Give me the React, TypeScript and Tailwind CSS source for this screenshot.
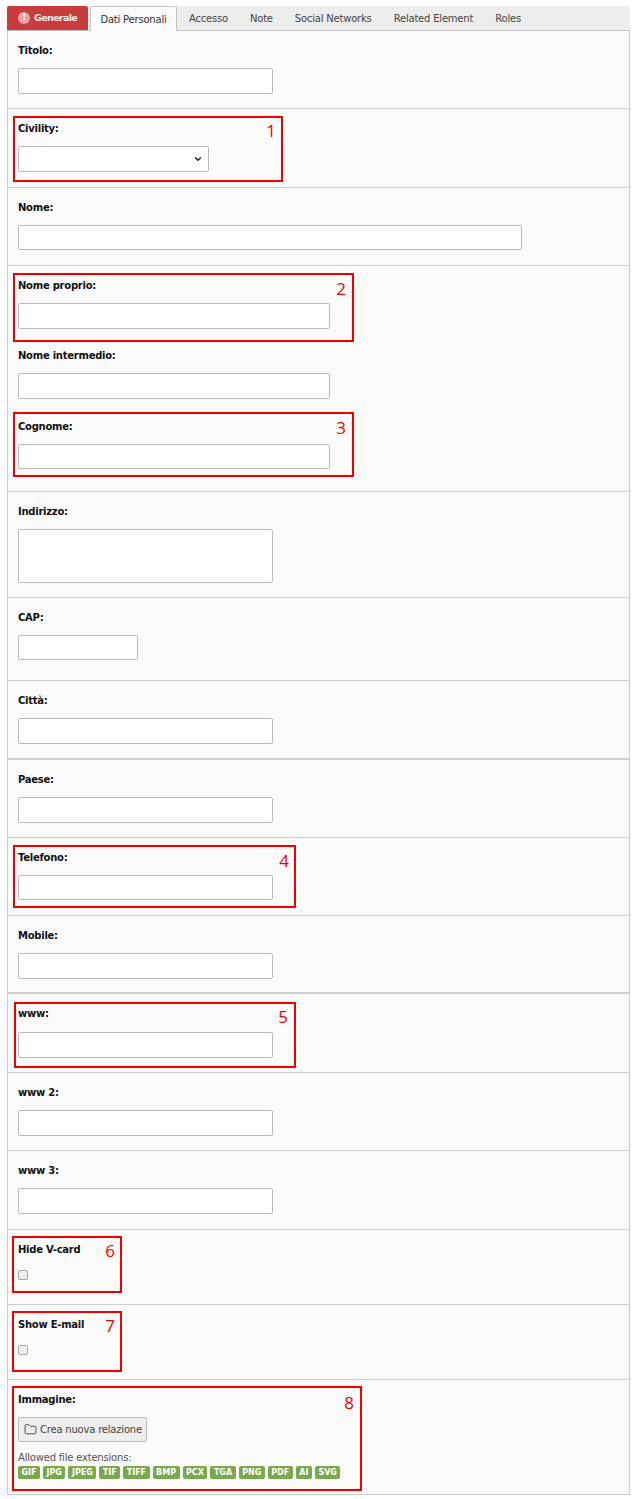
import { ChevronDown, Folder } from "lucide-react";

const font = "font-['DejaVu_Sans',Verdana,sans-serif]";
const inputCls = "block rounded-[2px] border border-[#bbbbbb] bg-white";

const tabs = [
  { name: "Accesso", cls: "ml-[12px] mr-[11px]" },
  { name: "Note", cls: "mx-[11px]" },
  { name: "Social Networks", cls: "mx-[11px]" },
  { name: "Related Element", cls: "mx-[11px]" },
  { name: "Roles", cls: "mx-[11px]" },
];

const exts = ["GIF", "JPG", "JPEG", "TIF", "TIFF", "BMP", "PCX", "TGA", "PNG", "PDF", "AI", "SVG"];

function Label({ children }: any) {
  return <div className="h-[14px] text-[10px] leading-[14px] font-bold tracking-[-0.25px] text-[#111]">{children}</div>;
}

function Field({ label, width = "w-[255px]", h = "h-[78px]", inputH = "h-[26px]", border = "border-b border-[#cccccc]", mt = "mt-[10px]" }: any) {
  return (
    <div className={`${border} pl-[10px] pt-[13px] ${h}`}>
      <Label>{label}</Label>
      <input className={`${inputCls} ${width} ${inputH} ${mt}`} />
    </div>
  );
}

function Note({ n, box, num }: any) {
  return (
    <div className={`absolute border-2 border-[#f00000] ${box}`}>
      <span className={`absolute font-['Open_Sans',sans-serif] text-[17px] leading-[20px] text-[#f00000] ${num}`}>{n}</span>
    </div>
  );
}

export default function App() {
  return (
    <div className={`relative h-[1499px] w-[635px] overflow-hidden bg-white ${font}`}>
      <div className="pt-[6px] pl-[7px] w-[630px]">
        {/* tab bar */}
        <div className="flex h-[25px] items-stretch border-b border-[#c4c4c4] bg-[#ededed] text-[10px] tracking-[-0.2px] text-[#444]">
          <div className="flex w-[81px] items-center gap-[4px] rounded-t-[2px] bg-[#c83c3c] pl-[11px] text-[9.5px] font-bold tracking-[-0.65px] text-[#fbeaea]">
            <span className="flex h-[12px] w-[12px] items-center justify-center rounded-full bg-[#e6a3a3] text-[8px] text-white">!</span>
            Generale
          </div>
          <div className="ml-[2px] -mb-px flex w-[87px] items-center justify-center rounded-t-[2px] border border-b-0 border-[#c4c4c4] bg-[#fafafa] text-[#333]">
            Dati Personali
          </div>
          {tabs.map((t) => (
            <div key={t.name} className={`flex items-center ${t.cls}`}>{t.name}</div>
          ))}
        </div>

        {/* form */}
        <div className="border-x border-[#cccccc] bg-[#fafafa]">
          <Field label="Titolo:" />
          <div className="h-[79px] border-b border-[#cccccc] pl-[10px] pt-[13px]">
            <Label>Civility:</Label>
            <div className="relative mt-[10px] h-[26px] w-[191px]">
              <select className="block h-full w-full appearance-none rounded-[2px] border border-[#bbbbbb] bg-white" />
              <ChevronDown size={10} strokeWidth={3.5} className="absolute right-[6px] top-[8px] text-[#222]" />
            </div>
          </div>
          <Field label="Nome:" width="w-[504px]" inputH="h-[25px]" />
          <div className="h-[226px] border-b border-[#cccccc] pl-[10px] pt-[13px]">
            <Label>Nome proprio:</Label>
            <input className={`${inputCls} mt-[10px] h-[26px] w-[312px]`} />
            <div className="mt-[20px]"><Label>Nome intermedio:</Label></div>
            <input className={`${inputCls} mt-[10px] h-[26px] w-[312px]`} />
            <div className="mt-[21px]"><Label>Cognome:</Label></div>
            <input className={`${inputCls} mt-[10px] h-[25px] w-[312px]`} />
          </div>
          <div className="h-[106px] border-b border-[#cccccc] pl-[10px] pt-[13px]">
            <Label>Indirizzo:</Label>
            <textarea className="mt-[10px] block h-[54px] w-[255px] resize-none rounded-[2px] border border-[#bbbbbb] bg-white" />
          </div>
          <Field label="CAP:" width="w-[120px]" h="h-[83px]" inputH="h-[25px]" />
          <Field label="Città:" h="h-[79px]" border="border-b-2 border-[#cfcfcf]" />
          <Field label="Paese:" />
          <Field label="Telefono:" inputH="h-[25px]" />
          <Field label="Mobile:" border="border-b-2 border-[#cfcfcf]" />
          <Field label="www:" h="h-[79px]" mt="mt-[11px]" />
          <Field label="www 2:" />
          <Field label="www 3:" h="h-[79px]" />
          <div className="h-[75px] border-b border-[#cccccc] pl-[10px] pt-[13px]">
            <Label>Hide V-card</Label>
            <input type="checkbox" className="mt-[13px] block h-[10px] w-[10px] appearance-none rounded-[2px] border border-[#aaaaaa] bg-[#eeeeee]" />
          </div>
          <div className="h-[75px] border-b border-[#cccccc] pl-[10px] pt-[13px]">
            <Label>Show E-mail</Label>
            <input type="checkbox" className="mt-[13px] block h-[10px] w-[10px] appearance-none rounded-[2px] border border-[#aaaaaa] bg-[#eeeeee]" />
          </div>
          <div className="h-[115px] border-b border-[#cccccc] pl-[10px] pt-[13px]">
            <Label>Immagine:</Label>
            <button className="mt-[10px] flex h-[25px] w-[129px] items-center gap-[3px] whitespace-nowrap rounded-[2px] border border-[#bbbbbb] bg-[#eeeeee] pl-[5px] text-[10px] tracking-[-0.2px] text-[#444]">
              <Folder size={13} strokeWidth={1.4} className="text-[#222]" />
              Crea nuova relazione
            </button>
            <div className="mt-[9px] h-[14px] text-[10px] leading-[14px] tracking-[-0.2px] text-[#555]">Allowed file extensions:</div>
            <div className="mt-[1px] flex gap-[3px]">
              {exts.map((e) => (
                <span key={e} className="flex h-[13px] items-center rounded-[2px] bg-[#7ba84c] px-[3.5px] text-[8px] font-bold text-white">{e}</span>
              ))}
            </div>
          </div>
        </div>
      </div>

      {/* red annotations */}
      <Note n="1" box="left-[13px] top-[116px] h-[66px] w-[270px]" num="right-[5px] top-[3px]" />
      <Note n="2" box="left-[13px] top-[273px] h-[69px] w-[341px]" num="right-[6px] top-[4px]" />
      <Note n="3" box="left-[13px] top-[412px] h-[65px] w-[341px]" num="right-[6px] top-[4px]" />
      <Note n="4" box="left-[13px] top-[845px] h-[63px] w-[283px]" num="right-[5px] top-[4px]" />
      <Note n="5" box="left-[14px] top-[1002px] h-[66px] w-[282px]" num="right-[6px] top-[3px]" />
      <Note n="6" box="left-[12px] top-[1236px] h-[57px] w-[110px]" num="right-[5px] top-[3px]" />
      <Note n="7" box="left-[12px] top-[1311px] h-[61px] w-[110px]" num="right-[5px] top-[3px]" />
      <Note n="8" box="left-[12px] top-[1386px] h-[105px] w-[350px]" num="right-[6px] top-[5px]" />
    </div>
  );
}
